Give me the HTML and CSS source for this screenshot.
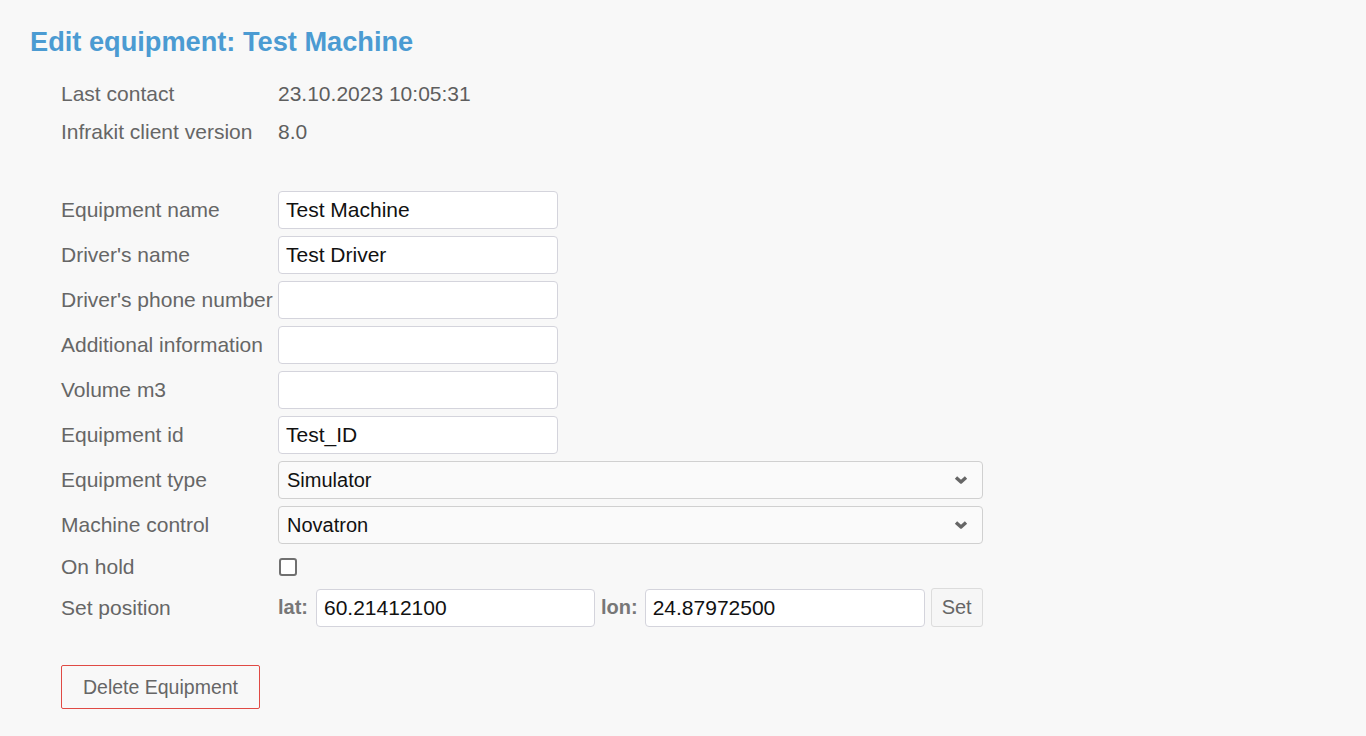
FILE: index.html
```html
<!DOCTYPE html>
<html>
<head>
<meta charset="utf-8">
<title>Edit equipment</title>
<link rel="stylesheet" href="styles.css">
</head>
<body>
<div class="page">
  <h1 class="title">Edit equipment: Test Machine</h1>
  <div class="info">
    <div class="label">Last contact</div><div class="value">23.10.2023 10:05:31</div>
    <div class="label">Infrakit client version</div><div class="value">8.0</div>
  </div>
  <form class="form">
    <label class="label">Equipment name</label><input class="field" type="text" value="Test Machine">
    <label class="label">Driver's name</label><input class="field" type="text" value="Test Driver">
    <label class="label">Driver's phone number</label><input class="field" type="text" value="">
    <label class="label">Additional information</label><input class="field" type="text" value="">
    <label class="label">Volume m3</label><input class="field" type="text" value="">
    <label class="label">Equipment id</label><input class="field" type="text" value="Test_ID">
    <label class="label">Equipment type</label>
    <div class="select"><span>Simulator</span><svg class="chev" width="14" height="10" viewBox="0 0 14 10"><path d="M2 2.5 L7 7 L12 2.5" fill="none" stroke="#666" stroke-width="3.4" stroke-linejoin="round"/></svg></div>
    <label class="label">Machine control</label>
    <div class="select"><span>Novatron</span><svg class="chev" width="14" height="10" viewBox="0 0 14 10"><path d="M2 2.5 L7 7 L12 2.5" fill="none" stroke="#666" stroke-width="3.4" stroke-linejoin="round"/></svg></div>
    <label class="label onhold">On hold</label>
    <div class="checkrow"><span class="checkbox"></span></div>
    <label class="label">Set position</label>
    <div class="position">
      <span class="coord">lat:</span><input class="field coordfield" type="text" value="60.21412100">
      <span class="coord lon">lon:</span><input class="field coordfield wide" type="text" value="24.87972500">
      <button type="button" class="setbtn">Set</button>
    </div>
  </form>
  <button type="button" class="delete">Delete Equipment</button>
</div>
</body>
</html>
```

FILE: styles.css
```css
html, body {
  margin: 0;
  padding: 0;
  background: #f8f8f8;
}
body {
  font-family: "Liberation Sans", Arial, sans-serif;
  font-size: 21px;
  color: #666;
}
.page {
  padding: 27px 0 0 30px;
}
.title {
  margin: 0;
  font-size: 27.2px;
  line-height: 30px;
  font-weight: bold;
  color: #4b9bd2;
}
.info {
  display: grid;
  grid-template-columns: 217px auto;
  grid-auto-rows: 38px;
  align-items: center;
  margin: 18px 0 0 31px;
}
.label {
  color: #666;
  white-space: nowrap;
}
.value {
  color: #5e5e5e;
}
.form {
  display: grid;
  grid-template-columns: 217px 705px;
  row-gap: 7px;
  align-items: center;
  margin: 40px 0 0 31px;
}
.field {
  box-sizing: border-box;
  height: 38px;
  width: 280px;
  border: 1px solid #d4d4dc;
  border-radius: 4px;
  background: #fff;
  padding: 0 7px;
  font-family: "Liberation Sans", Arial, sans-serif;
  font-size: 21px;
  color: #111;
  outline: none;
}
.select {
  box-sizing: border-box;
  height: 38px;
  width: 705px;
  border: 1px solid #d0d0d0;
  border-radius: 4px;
  background: #fafafa;
  display: flex;
  align-items: center;
  justify-content: space-between;
  padding: 0 14px 0 8px;
  color: #111;
  font-size: 20px;
}
.chev {
  display: block;
}
.checkrow {
  height: 30px;
  display: flex;
  align-items: center;
  padding-top: 2px;
  box-sizing: border-box;
}
.onhold {
  padding-top: 2px;
}
.checkbox {
  box-sizing: border-box;
  width: 18px;
  height: 18px;
  border: 2px solid #707070;
  border-radius: 3px;
  background: #fff;
  margin-left: 1px;
}
.position {
  display: flex;
  align-items: center;
  width: 705px;
}
.coord {
  font-weight: bold;
  color: #777;
  font-size: 20px;
  margin-right: 8px;
}
.coord.lon {
  margin-right: 7px;
}
.coordfield {
  width: 279px;
  margin-right: 6px;
}
.coordfield.wide {
  width: 280px;
}
.setbtn {
  box-sizing: border-box;
  height: 39px;
  width: 52px;
  border: 1px solid #dcdcdc;
  border-radius: 3px;
  background: #f6f6f6;
  color: #666;
  font-family: "Liberation Sans", Arial, sans-serif;
  font-size: 20px;
  padding: 0;
}
.delete {
  display: block;
  box-sizing: border-box;
  margin: 38px 0 0 31px;
  width: 199px;
  height: 44px;
  border: 1px solid #e04a44;
  border-radius: 2px;
  background: #f8f8f8;
  color: #666;
  font-family: "Liberation Sans", Arial, sans-serif;
  font-size: 19.5px;
  padding: 0;
}
```
